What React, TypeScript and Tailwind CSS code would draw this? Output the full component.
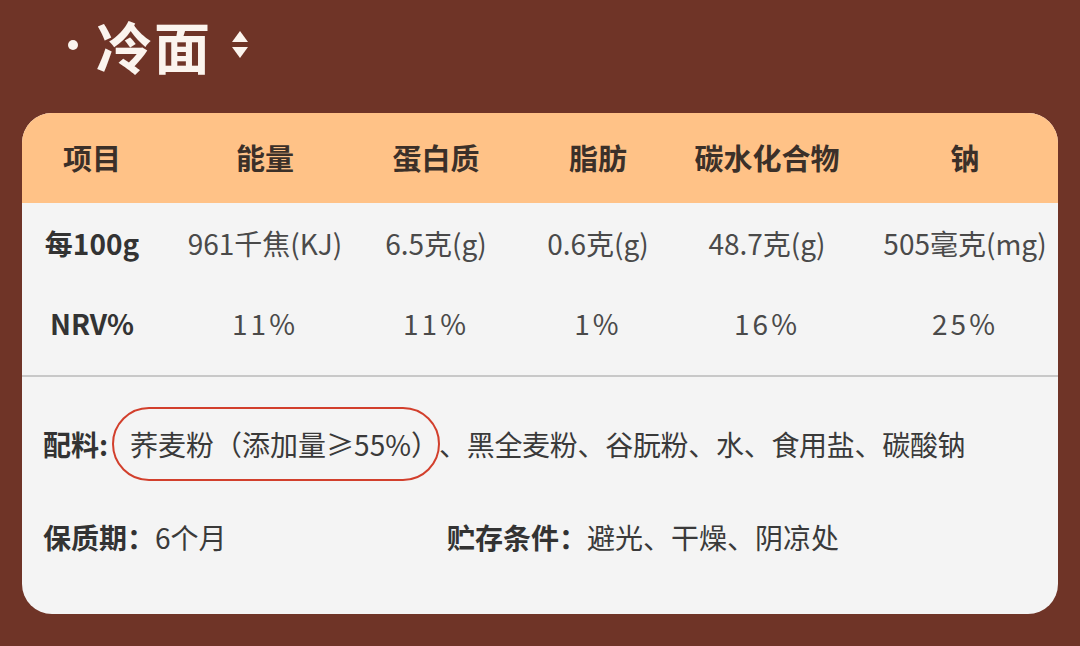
import React from 'react';

const cols = 'grid grid-cols-[140px_206px_136px_188px_150px_216px] items-center';

const headers = ['项目', '能量', '蛋白质', '脂肪', '碳水化合物', '钠'];
const perHundred = ['961千焦(KJ)', '6.5克(g)', '0.6克(g)', '48.7克(g)', '505毫克(mg)'];
const nrv = ['11%', '11%', '1%', '16%', '25%'];

const Cell = ({ children, last, className = '' }: { children: React.ReactNode; last?: boolean; className?: string }) => (
  <div className={`text-center whitespace-nowrap ${last ? 'pl-[30px]' : ''} ${className}`}>{children}</div>
);

const App = () => {
  return (
    <div
      className="w-[1080px] h-[646px] bg-[#6f3427] overflow-hidden"
      style={{ fontFamily: '"Noto Sans CJK SC", "Noto Sans", sans-serif' }}
    >
      <div className="h-[113px] flex items-center pl-[68px] pb-[24px]">
        <span className="w-[10px] h-[10px] rounded-full bg-[#fbf4ee] mr-[18px]" />
        <span className="text-[56px] font-bold text-[#fbf4ee] leading-none tracking-[2px]">冷面</span>
        <span className="ml-[20px] flex flex-col gap-[5px]">
          <svg width="16" height="11" viewBox="0 0 16 11"><polygon points="8,0 16,11 0,11" fill="#fbf4ee" /></svg>
          <svg width="16" height="11" viewBox="0 0 16 11"><polygon points="0,0 16,0 8,11" fill="#fbf4ee" /></svg>
        </span>
      </div>

      <div className="mx-[22px] w-[1036px] h-[501px] rounded-[30px] bg-[#f4f4f4] overflow-hidden text-[#3a3a3a]">
        <div className={`${cols} h-[90px] bg-[#ffc287] text-[29px] font-bold text-[#3b3029]`}>
          {headers.map((h, i) => (
            <Cell key={h} last={i === 5}>{h}</Cell>
          ))}
        </div>

        <div className={`${cols} h-[80px] text-[28px] text-[#4a4a4a]`}>
          <Cell className="font-bold text-[#333]">每100g</Cell>
          {perHundred.map((v, i) => (
            <Cell key={i} last={i === 4}>{v}</Cell>
          ))}
        </div>
        <div className={`${cols} h-[80px] text-[28px] text-[#4a4a4a]`}>
          <Cell className="font-bold text-[#333]">NRV%</Cell>
          {nrv.map((v, i) => (
            <Cell key={i} last={i === 4} className="tracking-[3px]">{v}</Cell>
          ))}
        </div>

        <div className="mt-[12px] h-[2px] bg-[#c8c8c8]" />

        <div className="pl-[21px] pt-[37px] text-[28px] text-[#3a3a3a]">
          <div className="h-[60px] flex items-center whitespace-nowrap">
            <span className="font-bold text-[#333]">配料:</span>
            <span className="relative ml-[22px]">
              荞麦粉（添加量≥55%）
              <span className="absolute left-[-18px] right-[-1px] top-[-16px] bottom-[-16px] rounded-full border-[2.5px] border-[#d23f2c]" />
            </span>
            <span className="tracking-[-0.3px]">、黑全麦粉、谷朊粉、水、食用盐、碳酸钠</span>
          </div>
          <div className="mt-[33px] h-[60px] flex items-center whitespace-nowrap">
            <div className="w-[404px]">
              <span className="font-bold text-[#333]">保质期：</span>
              <span>6个月</span>
            </div>
            <div>
              <span className="font-bold text-[#333]">贮存条件：</span>
              <span>避光、干燥、阴凉处</span>
            </div>
          </div>
        </div>
      </div>
    </div>
  );
};

export default App;
